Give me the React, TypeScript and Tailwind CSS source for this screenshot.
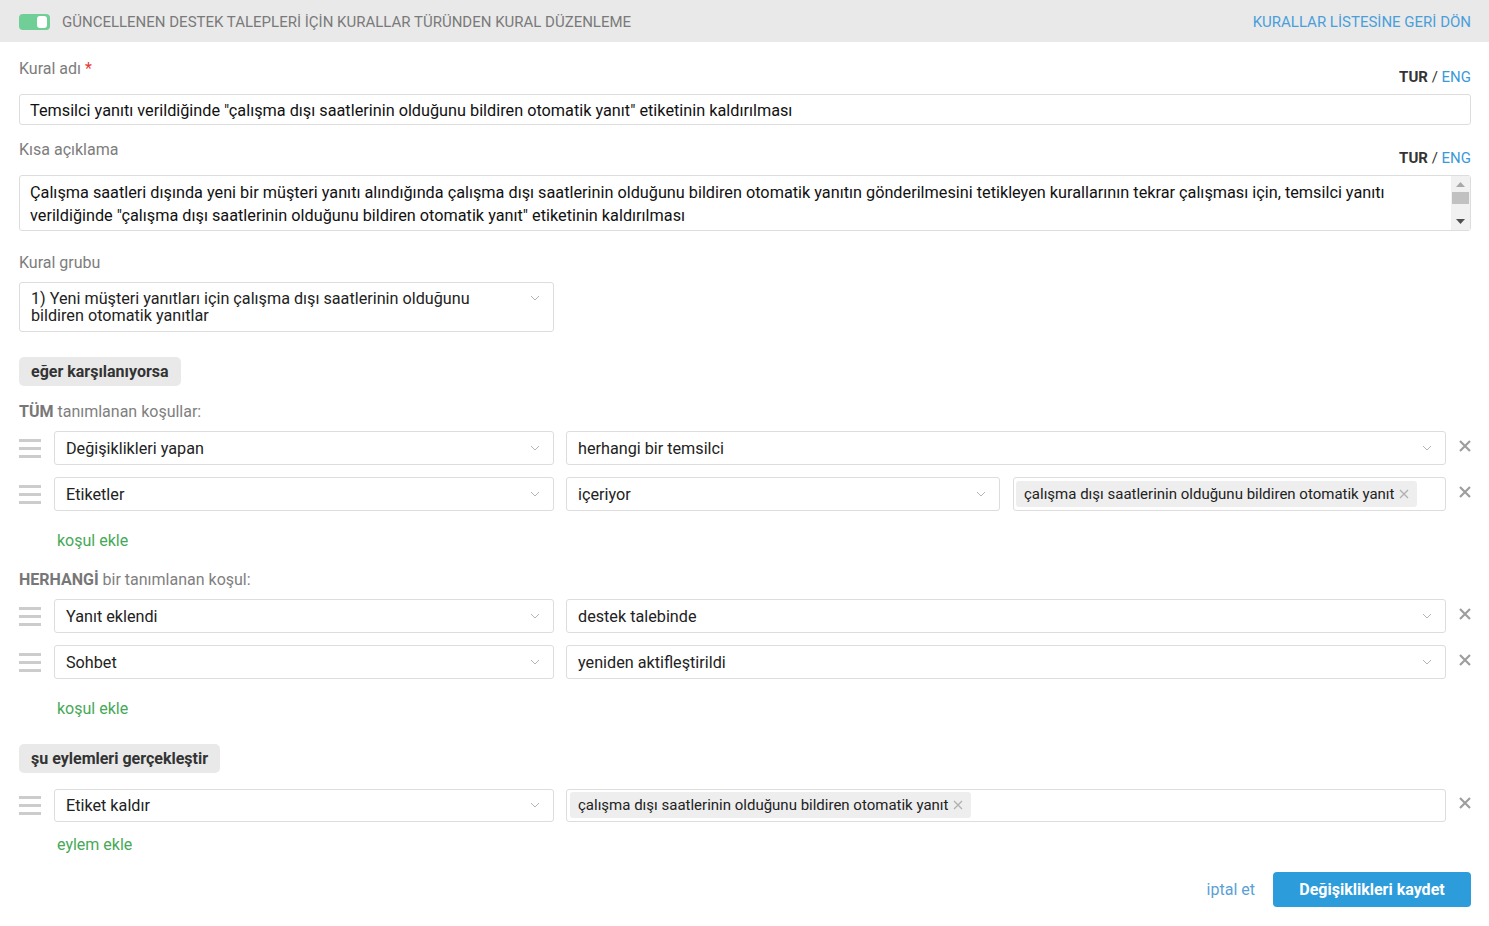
import React from "react";

const Chevron = () => (
  <svg width="10" height="6" viewBox="0 0 10 6" className="shrink-0">
    <path d="M1 1 L5 5 L9 1" fill="none" stroke="#b5b5b5" strokeWidth="1" />
  </svg>
);

const Handle = () => (
  <div className="w-[22px] shrink-0 flex flex-col gap-[5px]">
    <div className="h-[3px] bg-[#cccccc]" />
    <div className="h-[3px] bg-[#cccccc]" />
    <div className="h-[3px] bg-[#cccccc]" />
  </div>
);

const Close = () => (
  <svg width="12" height="12" viewBox="0 0 12 12" className="shrink-0">
    <path d="M1 1 L11 11 M11 1 L1 11" stroke="#9e9e9e" strokeWidth="2.2" />
  </svg>
);

const SmallX = () => (
  <svg width="10" height="10" viewBox="0 0 10 10" className="shrink-0">
    <path d="M1 1 L9 9 M9 1 L1 9" stroke="#b0b0b0" strokeWidth="1.3" />
  </svg>
);

const Select = ({ text, className = "" }: { text: string; className?: string }) => (
  <div
    className={`h-[34px] border border-[#dddddd] rounded-[3px] bg-white flex items-center justify-between pl-[11px] pr-[13px] text-[16.2px] text-[#222] ${className}`}
  >
    <span className="pt-[3px]">{text}</span>
    <Chevron />
  </div>
);

const Tag = ({ text }: { text: string }) => (
  <div className="h-[26px] bg-[#eeeeee] rounded-[3px] flex items-center gap-[5px] pl-[8px] pr-[8px] text-[15px] text-[#222]">
    <span className="pt-[1px]">{text}</span>
    <SmallX />
  </div>
);

const Row = ({ children }: { children: React.ReactNode }) => (
  <div className="flex items-center h-[34px]">
    <Handle />
    <div className="flex flex-1 items-center ml-[13px] gap-[12px]">{children}</div>
    <div className="w-[25px] flex justify-end items-center -mt-[4px]">
      <Close />
    </div>
  </div>
);

const Lang = () => (
  <div className="text-[15px] leading-[20px] mt-[8px]">
    <span className="font-bold text-[#333]">TUR</span>
    <span className="text-[#333]"> / </span>
    <span className="text-[#3a9ad9]">ENG</span>
  </div>
);

const Label = ({ children, className = "" }: { children: React.ReactNode; className?: string }) => (
  <div className={`text-[16px] leading-[20px] text-[#7d7d7d] ${className}`}>{children}</div>
);

const SectionButton = ({ text, className = "" }: { text: string; className?: string }) => (
  <div className={`flex ${className}`}>
    <div className="h-[29px] flex items-center px-[12px] pt-[1px] bg-[#e9e9e9] rounded-[5px] text-[16px] font-bold text-[#333]">
      {text}
    </div>
  </div>
);

const AddLink = ({ text, className = "" }: { text: string; className?: string }) => (
  <div className={`ml-[38px] text-[16px] leading-[20px] text-[#46a957] ${className}`}>{text}</div>
);

export default function App() {
  const tagText = "çalışma dışı saatlerinin olduğunu bildiren otomatik yanıt";
  return (
    <div className="w-[1489px] min-h-[926px] bg-white" style={{ fontFamily: "Roboto, 'Noto Sans', sans-serif" }}>
      <div className="h-[42px] bg-[#e9e9e9] flex items-center justify-between pl-[19px] pr-[18px] pt-[3px]">
        <div className="flex items-center">
          <div className="w-[31px] h-[16px] rounded-[4px] bg-[#6fcf97] relative -mt-[2px]">
            <div className="absolute right-[3px] top-[2px] w-[10px] h-[12px] rounded-[3px] bg-white" />
          </div>
          <span className="ml-[12px] text-[15px] text-[#7a7a7a]">
            GÜNCELLENEN DESTEK TALEPLERİ İÇİN KURALLAR TÜRÜNDEN KURAL DÜZENLEME
          </span>
        </div>
        <span className="text-[15px] text-[#4a9fdb]">KURALLAR LİSTESİNE GERİ DÖN</span>
      </div>

      <div className="pl-[19px] pr-[18px]">
        <div className="flex justify-between items-start pt-[17px]">
          <Label>
            Kural adı <span className="text-[#e53935]">*</span>
          </Label>
          <Lang />
        </div>
        <div className="mt-[7px] h-[31px] border border-[#dddddd] rounded-[3px] flex items-center px-[10px] pt-[3px] text-[16.25px] text-[#111]">
          Temsilci yanıtı verildiğinde "çalışma dışı saatlerinin olduğunu bildiren otomatik yanıt" etiketinin kaldırılması
        </div>

        <div className="flex justify-between items-start pt-[15px]">
          <Label>Kısa açıklama</Label>
          <Lang />
        </div>
        <div className="mt-[7px] h-[56px] border border-[#dddddd] rounded-[3px] flex text-[16.25px] text-[#111] leading-[23px]">
          <div className="flex-1 pl-[10px] pr-[60px] pt-[5px]">
            Çalışma saatleri dışında yeni bir müşteri yanıtı alındığında çalışma dışı saatlerinin olduğunu bildiren otomatik yanıtın gönderilmesini tetikleyen kurallarının tekrar çalışması için, temsilci yanıtı verildiğinde "çalışma dışı saatlerinin olduğunu bildiren otomatik yanıt" etiketinin kaldırılması
          </div>
          <div className="w-[19px] bg-[#f1f1f1] flex flex-col items-center justify-between py-[6px]">
            <svg width="9" height="5" viewBox="0 0 9 5"><path d="M0 5 L4.5 0 L9 5 Z" fill="#a8a8a8" /></svg>
            <div className="w-[17px] h-[12px] bg-[#c1c1c1] -mt-[10px]" />
            <svg width="9" height="5" viewBox="0 0 9 5"><path d="M0 0 L4.5 5 L9 0 Z" fill="#505050" /></svg>
          </div>
        </div>

        <Label className="mt-[22px]">Kural grubu</Label>
        <div className="mt-[9px] w-[535px] h-[50px] border border-[#dddddd] rounded-[3px] flex justify-between pl-[11px] pr-[13px] pt-[7px] text-[16.2px] text-[#222] leading-[17px]">
          <span>
            1) Yeni müşteri yanıtları için çalışma dışı saatlerinin olduğunu
            <br />
            bildiren otomatik yanıtlar
          </span>
          <div className="pt-[5px]"><Chevron /></div>
        </div>

        <SectionButton text="eğer karşılanıyorsa" className="mt-[25px]" />

        <Label className="mt-[16px] text-[#808080]">
          <span className="font-bold text-[#777]">TÜM</span> tanımlanan koşullar:
        </Label>

        <div className="mt-[9px] flex flex-col gap-[12px]">
          <Row>
            <Select text="Değişiklikleri yapan" className="w-[500px]" />
            <Select text="herhangi bir temsilci" className="flex-1" />
          </Row>
          <Row>
            <Select text="Etiketler" className="w-[500px]" />
            <Select text="içeriyor" className="w-[434px]" />
            <div className="flex-1 ml-[1px] h-[34px] border border-[#dddddd] rounded-[3px] flex items-center pl-[2px]">
              <Tag text={tagText} />
            </div>
          </Row>
        </div>
        <AddLink text="koşul ekle" className="mt-[20px]" />

        <Label className="mt-[19px] text-[#808080]">
          <span className="font-bold text-[#777]">HERHANGİ</span> bir tanımlanan koşul:
        </Label>

        <div className="mt-[9px] flex flex-col gap-[12px]">
          <Row>
            <Select text="Yanıt eklendi" className="w-[500px]" />
            <Select text="destek talebinde" className="flex-1" />
          </Row>
          <Row>
            <Select text="Sohbet" className="w-[500px]" />
            <Select text="yeniden aktifleştirildi" className="flex-1" />
          </Row>
        </div>
        <AddLink text="koşul ekle" className="mt-[20px]" />

        <SectionButton text="şu eylemleri gerçekleştir" className="mt-[25px]" />

        <div className="mt-[15px]">
          <Row>
            <Select text="Etiket kaldır" className="w-[500px] !h-[33px]" />
            <div className="flex-1 h-[33px] border border-[#dddddd] rounded-[3px] flex items-center pl-[3px]">
              <Tag text={tagText} />
            </div>
          </Row>
        </div>
        <AddLink text="eylem ekle" className="mt-[13px]" />

        <div className="mt-[17px] flex justify-end items-center">
          <span className="text-[16px] text-[#5b9fd6] mr-[18px]">iptal et</span>
          <div className="w-[198px] h-[35px] rounded-[4px] bg-[#2d9cdb] flex items-center justify-center pt-[1px] text-white font-bold text-[16px]">
            Değişiklikleri kaydet
          </div>
        </div>
      </div>
    </div>
  );
}
